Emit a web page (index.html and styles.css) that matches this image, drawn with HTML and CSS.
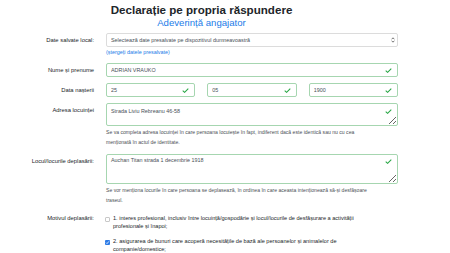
FILE: index.html
```html
<!DOCTYPE html>
<html>
<head>
  <meta charset="utf-8">
  <title>Declarație pe propria răspundere</title>
  <link rel="stylesheet" href="styles.css">
</head>
<body>
  <div class="page">
    <div class="head">
      <h1>Declarație pe propria răspundere</h1>
      <h2><a href="#">Adeverință angajator</a></h2>
    </div>
    <form class="form">
      <div class="row first">
        <label class="lbl">Date salvate local:</label>
        <div class="field">
          <div class="box select">
            <select>
              <option>Selectează date presalvate pe dispozitivul dumneavoastră</option>
            </select>
            <svg class="arrows" width="4" height="6" viewBox="0 0 4 6"><path d="M0.6 2.3 L2 0.8 L3.4 2.3 M0.6 3.7 L2 5.2 L3.4 3.7" fill="none" stroke="#555" stroke-width="0.8"/></svg>
          </div>
          <a class="clear" href="#">(ștergeți datele presalvate)</a>
        </div>
      </div>

      <div class="row">
        <label class="lbl" for="nume">Nume și prenume</label>
        <div class="field">
          <div class="box valid">
            <input type="text" id="nume" value="ADRIAN VRAUKO">
            <svg class="check" width="7" height="5" viewBox="0 0 7 5"><path d="M0.7 2.6 L2.6 4.3 L6.3 0.7" fill="none" stroke="#28a745" stroke-width="1.1"/></svg>
          </div>
        </div>
      </div>

      <div class="row">
        <label class="lbl">Data nașterii</label>
        <div class="field dates">
          <div class="box valid">
            <input type="text" value="25">
            <svg class="check" width="7" height="5" viewBox="0 0 7 5"><path d="M0.7 2.6 L2.6 4.3 L6.3 0.7" fill="none" stroke="#28a745" stroke-width="1.1"/></svg>
          </div>
          <div class="box valid">
            <input type="text" value="05">
            <svg class="check" width="7" height="5" viewBox="0 0 7 5"><path d="M0.7 2.6 L2.6 4.3 L6.3 0.7" fill="none" stroke="#28a745" stroke-width="1.1"/></svg>
          </div>
          <div class="box valid">
            <input type="text" value="1900">
            <svg class="check" width="7" height="5" viewBox="0 0 7 5"><path d="M0.7 2.6 L2.6 4.3 L6.3 0.7" fill="none" stroke="#28a745" stroke-width="1.1"/></svg>
          </div>
        </div>
      </div>

      <div class="row">
        <label class="lbl" for="adresa">Adresa locuinței</label>
        <div class="field">
          <div class="box valid area">
            <textarea id="adresa">Strada Liviu Rebreanu 46-58</textarea>
            <svg class="check" width="7" height="5" viewBox="0 0 7 5"><path d="M0.7 2.6 L2.6 4.3 L6.3 0.7" fill="none" stroke="#28a745" stroke-width="1.1"/></svg>
          </div>
          <p class="help">Se va completa adresa locuinței în care persoana locuiește în fapt, indiferent dacă este identică sau nu cu cea menționată în actul de identitate.</p>
        </div>
      </div>

      <div class="row">
        <label class="lbl" for="locul">Locul/locurile deplasării:</label>
        <div class="field">
          <div class="box valid area tall">
            <textarea id="locul">Auchan Titan strada 1 decembrie 1918</textarea>
            <svg class="check" width="7" height="5" viewBox="0 0 7 5"><path d="M0.7 2.6 L2.6 4.3 L6.3 0.7" fill="none" stroke="#28a745" stroke-width="1.1"/></svg>
          </div>
          <p class="help">Se vor menționa locurile în care persoana se deplasează, în ordinea în care aceasta intenționează să-și desfășoare traseul.</p>
        </div>
      </div>

      <div class="row reasons">
        <label class="lbl">Motivul deplasării:</label>
        <div class="field">
          <label class="opt">
            <span class="tick"></span>
            <span>1. interes profesional, inclusiv între locuință/gospodărie și locul/locurile de desfășurare a activității profesionale și înapoi;</span>
          </label>
          <label class="opt">
            <span class="tick on"><svg width="5" height="5" viewBox="0 0 5 5"><path d="M1 2.6 L2 3.6 L4 1.3" fill="none" stroke="#fff" stroke-width="0.8"/></svg></span>
            <span>2. asigurarea de bunuri care acoperă necesitățile de bază ale persoanelor și animalelor de companie/domestice;</span>
          </label>
        </div>
      </div>
    </form>
  </div>
</body>
</html>
```

FILE: styles.css
```css
body {
  margin: 0;
  font-family: "Liberation Sans", Arial, sans-serif;
  color: #212529;
  background: #fff;
}
.page {
  width: 393px;
  padding: 3px 0 0 5px;
}
.head {
  text-align: center;
}
.head h1 {
  margin: 0;
  font-size: 11.6px;
  font-weight: bold;
  line-height: 14px;
}
.head h2 {
  margin: 0;
  font-size: 9.6px;
  font-weight: normal;
  line-height: 12px;
}
.head h2 a {
  color: #1a7ce8;
  text-decoration: none;
}
.form {
  margin-top: 4px;
}
.row {
  display: flex;
  gap: 12px;
  margin-bottom: 6px;
}
.row.first {
  margin-bottom: 7px;
}
.lbl {
  width: 89px;
  flex: none;
  text-align: right;
  font-size: 5.85px;
  line-height: 14px;
}
.field {
  width: 292px;
}
.dates {
  display: flex;
  gap: 12px;
}
.dates .box {
  flex: 1;
}
.box {
  position: relative;
  height: 14px;
  box-sizing: border-box;
  border: 1px solid #dcdcdc;
  border-radius: 2px;
  background: #fff;
}
.box.valid {
  border-color: #a6d6b0;
}
.box input,
.box select,
.box textarea {
  display: block;
  width: 100%;
  height: 100%;
  box-sizing: border-box;
  margin: 0;
  border: 0;
  outline: 0;
  background: transparent;
  font-family: inherit;
  font-size: 5.4px;
  color: #495057;
  padding: 0 4px;
}
.box select {
  appearance: none;
  -webkit-appearance: none;
}
.box textarea {
  resize: vertical;
  line-height: 8px;
  padding-top: 3px;
}
.area {
  height: 23px;
}
.area.tall {
  height: 30px;
}
.area.tall textarea {
  padding-top: 1px;
}
.arrows {
  position: absolute;
  right: 2px;
  top: 3px;
}
.check {
  position: absolute;
  right: 5px;
  top: 4px;
}
.area .check {
  top: 5px;
}
.area.tall .check {
  top: 4px;
}
.clear {
  display: block;
  font-size: 5.4px;
  line-height: 8px;
  margin-top: 1px;
  color: #1a7ce8;
  text-decoration: none;
}
.help {
  margin: 1px 0 0;
  font-size: 5.1px;
  line-height: 10.3px;
  color: #4a4f55;
  padding-right: 18px;
}
.reasons {
  margin-top: 8.5px;
}
.reasons .lbl {
  line-height: 8.5px;
}
.opt {
  display: flex;
  gap: 3px;
  font-size: 5.6px;
  line-height: 8.5px;
  margin-bottom: 6px;
  padding-right: 20px;
}
.tick {
  flex: none;
  display: block;
  width: 5px;
  height: 5px;
  box-sizing: border-box;
  margin: 3px 0 0 -1px;
  border: 1px solid #c8c8c8;
  border-radius: 1px;
  background: #fff;
}
.tick.on {
  border: 0;
  background: #2d7be6;
}
.tick svg {
  display: block;
}
```
